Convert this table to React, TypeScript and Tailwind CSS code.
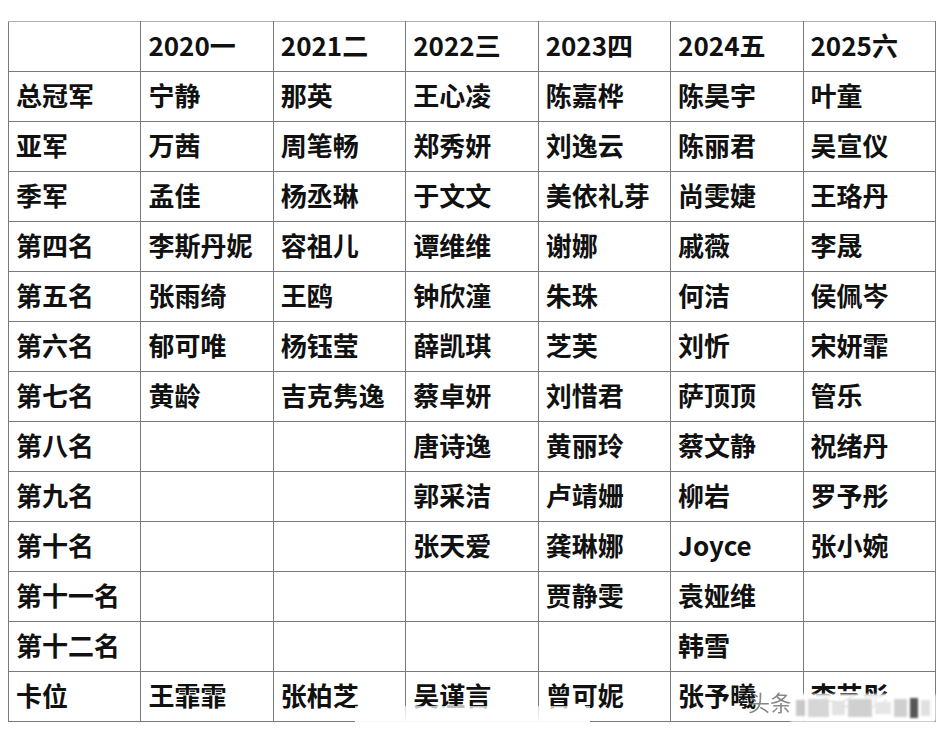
import React from "react";

const years = ["2020一", "2021二", "2022三", "2023四", "2024五", "2025六"];

const rows: { label: string; names: string[] }[] = [
  { label: "总冠军", names: ["宁静", "那英", "王心凌", "陈嘉桦", "陈昊宇", "叶童"] },
  { label: "亚军", names: ["万茜", "周笔畅", "郑秀妍", "刘逸云", "陈丽君", "吴宣仪"] },
  { label: "季军", names: ["孟佳", "杨丞琳", "于文文", "美依礼芽", "尚雯婕", "王珞丹"] },
  { label: "第四名", names: ["李斯丹妮", "容祖儿", "谭维维", "谢娜", "戚薇", "李晟"] },
  { label: "第五名", names: ["张雨绮", "王鸥", "钟欣潼", "朱珠", "何洁", "侯佩岑"] },
  { label: "第六名", names: ["郁可唯", "杨钰莹", "薛凯琪", "芝芙", "刘忻", "宋妍霏"] },
  { label: "第七名", names: ["黄龄", "吉克隽逸", "蔡卓妍", "刘惜君", "萨顶顶", "管乐"] },
  { label: "第八名", names: ["", "", "唐诗逸", "黄丽玲", "蔡文静", "祝绪丹"] },
  { label: "第九名", names: ["", "", "郭采洁", "卢靖姗", "柳岩", "罗予彤"] },
  { label: "第十名", names: ["", "", "张天爱", "龚琳娜", "Joyce", "张小婉"] },
  { label: "第十一名", names: ["", "", "", "贾静雯", "袁娅维", ""] },
  { label: "第十二名", names: ["", "", "", "", "韩雪", ""] },
  { label: "卡位", names: ["王霏霏", "张柏芝", "吴谨言", "曾可妮", "张予曦", "李艺彤"] },
];

const cell =
  "h-[50px] border border-[#7a7a7a] pl-[7px] pb-[3px] text-left align-middle whitespace-nowrap overflow-hidden";

export default function App() {
  return (
    <div
      className="relative w-[942px] h-[732px] overflow-hidden bg-white text-[#111] font-semibold"
      style={{ fontFamily: '"Noto Sans CJK SC", "Noto Sans", sans-serif' }}
    >
      <table className="ml-[8px] mt-[21px] w-[928px] table-fixed border-collapse text-[26px] leading-none">
        <thead>
          <tr>
            <th className={`${cell} border-t-[#b0b0b0] font-semibold`}></th>
            {years.map((y) => (
              <th key={y} className={`${cell} border-t-[#b0b0b0] font-semibold`}>
                {y}
              </th>
            ))}
          </tr>
        </thead>
        <tbody>
          {rows.map((r) => (
            <tr key={r.label}>
              <td className={cell}>{r.label}</td>
              {r.names.map((n, i) => (
                <td key={i} className={cell}>
                  {n}
                </td>
              ))}
            </tr>
          ))}
        </tbody>
      </table>

      {/* faded strip over the bottom row, left of the watermark */}
      <div className="absolute left-[355px] top-[706px] h-[30px] w-[235px] bg-gradient-to-b from-white/70 via-white/95 to-white"></div>
      <div className="absolute left-[355px] top-[723px] h-[12px] w-[587px] bg-white"></div>

      {/* watermark */}
      <div className="absolute left-[748px] top-[690px] text-[22px] font-normal text-[#6b6b6b] opacity-80 leading-none">
        头条
      </div>
      <div className="absolute left-[790px] top-[694px] flex h-[28px] w-[146px] items-center gap-[3px] rounded-[3px] bg-white/95 px-[6px] blur-[1px]">
        <div className="h-[16px] w-[10px] bg-[#c8c8c8]"></div>
        <div className="h-[18px] w-[22px] bg-[#d6d6d6]"></div>
        <div className="h-[14px] w-[14px] bg-[#e2e2e2]"></div>
        <div className="h-[18px] w-[26px] bg-[#d0d0d0]"></div>
        <div className="h-[12px] w-[18px] bg-[#e6e6e6]"></div>
        <div className="h-[18px] w-[14px] bg-[#cfcfcf]"></div>
        <div className="h-[20px] w-[8px] bg-[#555]"></div>
        <div className="h-[16px] w-[10px] bg-[#e0e0e0]"></div>
      </div>
    </div>
  );
}
